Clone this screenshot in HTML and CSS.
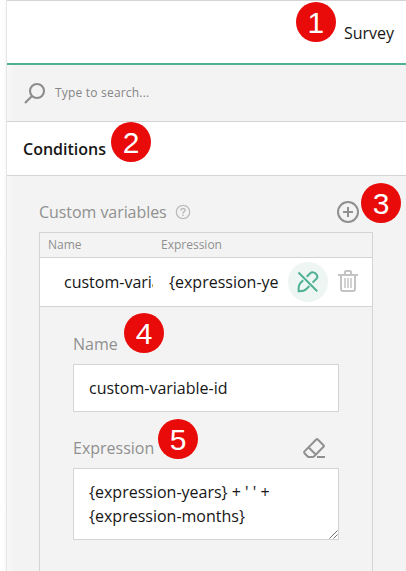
FILE: index.html
```html
<!DOCTYPE html>
<html lang="en">
<head>
<meta charset="utf-8">
<title>Survey settings</title>
<link rel="stylesheet" href="styles.css">
</head>
<body>
<div class="panel">
  <header class="header"><span class="title">Survey<b class="badge b1">1</b></span></header>
  <div class="search">
    <svg class="search-icon" width="22" height="22" viewBox="0 0 22 22" fill="none" stroke="#8c8c8c" stroke-width="2.1"><circle cx="13" cy="9" r="7"/><path d="M8 14L1 21"/></svg>
    <span>Type to search...</span>
  </div>
  <div class="tab"><span class="tab-text">Conditions<b class="badge b2">2</b></span></div>
  <main class="content">
    <div class="heading">
      <span class="heading-text">Custom variables</span>
      <svg class="help" width="16" height="16" viewBox="0 0 16 16" fill="none" stroke="#bcbcbc" stroke-width="1.3"><circle cx="8" cy="8" r="6.7"/><path d="M5.9 6.5C5.9 3.8 10.1 3.8 10.1 6.2C10.1 7.7 8 7.7 8 9.4M8 10.5V12" stroke-width="1.5"/></svg>
      <span class="add"><svg width="22" height="22" viewBox="0 0 22 22" fill="none" stroke="#909090" stroke-width="2"><circle cx="11" cy="11" r="10"/><path d="M11 6V16M6 11H16"/></svg><b class="badge b3">3</b></span>
    </div>
    <section class="table">
      <div class="columns"><span>Name</span><span>Expression</span></div>
      <div class="row">
        <span class="cell name">custom-variable-id</span>
        <span class="cell expr">{expression-years}</span>
        <span class="edit"><svg width="24" height="24" viewBox="0 0 24 24" fill="none" stroke="#4fb093" stroke-width="2"><path d="M2.5 2.5L21.2 21.2"/><path d="M7.2 10.3L4.2 13.3Q2.2 15.5 2.7 21.2Q8 21.4 10.4 19L13.4 16"/><path d="M10.7 6.8L14.3 3.2Q16.5 1 19.8 3.6Q22.6 6.5 20.4 8.8L16.6 12.6"/></svg></span>
        <svg class="trash" width="20" height="22" viewBox="0 0 20 22" fill="none" stroke="#c4c4c4" stroke-width="2"><path d="M0 5H20M7 5V2Q7 1 8 1H12Q13 1 13 2V5M3 5V19Q3 21 5 21H15Q17 21 17 19V5"/><path d="M7 8V18M10 8V18M13 8V18" stroke-width="1.5"/></svg>
      </div>
      <div class="details">
        <div class="label"><span class="label-text">Name<b class="badge b4">4</b></span></div>
        <div class="field">custom-variable-id</div>
        <div class="label second"><span class="label-text">Expression<b class="badge b5">5</b></span>
          <svg class="eraser" width="22" height="20" viewBox="0 0 22 20" fill="none" stroke="#909090" stroke-width="2" stroke-linejoin="round"><path d="M13.2 1.5Q14 .7 14.8 1.5L20.5 7.2Q21.3 8 20.5 8.8L11.2 18.2Q10.4 19 9.5 19H5.2L1.5 15.2Q.8 14.4 1.5 13.4ZM5.5 9.3L12.7 16.5M14 19H22"/></svg>
        </div>
        <div class="field area">{expression-years} + ' ' +<br>{expression-months}
          <svg class="grip" width="9" height="9" viewBox="0 0 9 9" fill="none" stroke="#606060" stroke-width=".9"><path d="M.5 8.5L8.5 .5M4.5 8.5L8.5 4.5"/></svg>
        </div>
      </div>
    </section>
  </main>
</div>
</body>
</html>
```
FILE: styles.css
```css
* { box-sizing: border-box; }
html, body { margin: 0; height: 571px; overflow: hidden; background: #fff; }
body { font: 16px/24px "Open Sans", sans-serif; color: #161616; padding-left: 6px; background: linear-gradient(to right, #fff 3px, #f9f9f9 6px); }
.panel { display: flex; flex-direction: column; width: 400px; height: 571px; border-left: 1px solid #e6e6e6; background: linear-gradient(to right, #f8f8f8, #f3f3f3 7px); }
.header { height: 65px; border-top: 1px solid #d4d4d4; border-bottom: 2px solid #4fb093; background: #fff; display: flex; justify-content: flex-end; padding: 20px 12px 0 0; }
.title, .tab-text, .label-text, .add { position: relative; }
.search { height: 56px; display: flex; align-items: center; padding-left: 17px; font-size: 12px; letter-spacing: .2px; color: #858585; }
.search-icon { margin-right: 9px; }
.tab { height: 55px; border: solid #d4d4d4; border-width: 1px 0; background: #fff; padding: 15px 0 0 16px; font-weight: 600; }
.content { flex: 1; display: flex; flex-direction: column; padding: 24px 33px 0 32px; }
.heading { height: 32px; display: flex; color: #909090; padding-right: 14px; }
.heading-text { letter-spacing: -.06px; }
.help { margin: 4px 0 0 8px; }
.add { margin-left: auto; height: 22px; margin-top: 1px; }
.add svg { display: block; }
.table { flex: 1; width: 334px; border: 1px solid #d4d4d4; border-bottom: 0; }
.columns { height: 24px; display: grid; grid-template-columns: 113px 1fr; padding-left: 8px; font-size: 12px; color: #909090; }
.row { height: 50px; border: solid #d4d4d4; border-width: 1px 0; background: #fff; display: flex; align-items: center; padding-left: 24px; }
.cell { overflow: hidden; white-space: nowrap; }
.name { width: 89px; }
.expr { width: 110px; margin-left: 16px; }
.edit { width: 40px; height: 40px; margin-left: 9px; border-radius: 50%; background: #edf6f3; display: flex; align-items: center; justify-content: center; }
.trash { margin-left: 10px; position: relative; top: -1px; }
.details { padding: 25px 33px 0; }
.label { height: 32px; display: flex; justify-content: space-between; color: #909090; }
.field { height: 48px; border: 1px solid #d4d4d4; background: #fff; padding: 11px 15px; }
.second { margin-top: 24px; }
.eraser { margin: 2px 14px 0 0; }
.area { height: 72px; position: relative; }
.grip { position: absolute; right: 0; bottom: 0; }
.badge { position: absolute; width: 40px; height: 40px; border-radius: 50%; background: #e90a0a; color: #fff; font: 30px/42px "Liberation Sans", sans-serif; letter-spacing: 0; text-align: center; }
.b1 { left: -48px; top: -19px; }
.b2 { left: 88px; top: -16px; }
.b3 { left: 24px; top: -18px; }
.b4 { left: 51px; top: -19px; }
.b5 { left: 85px; top: -17px; }
```
